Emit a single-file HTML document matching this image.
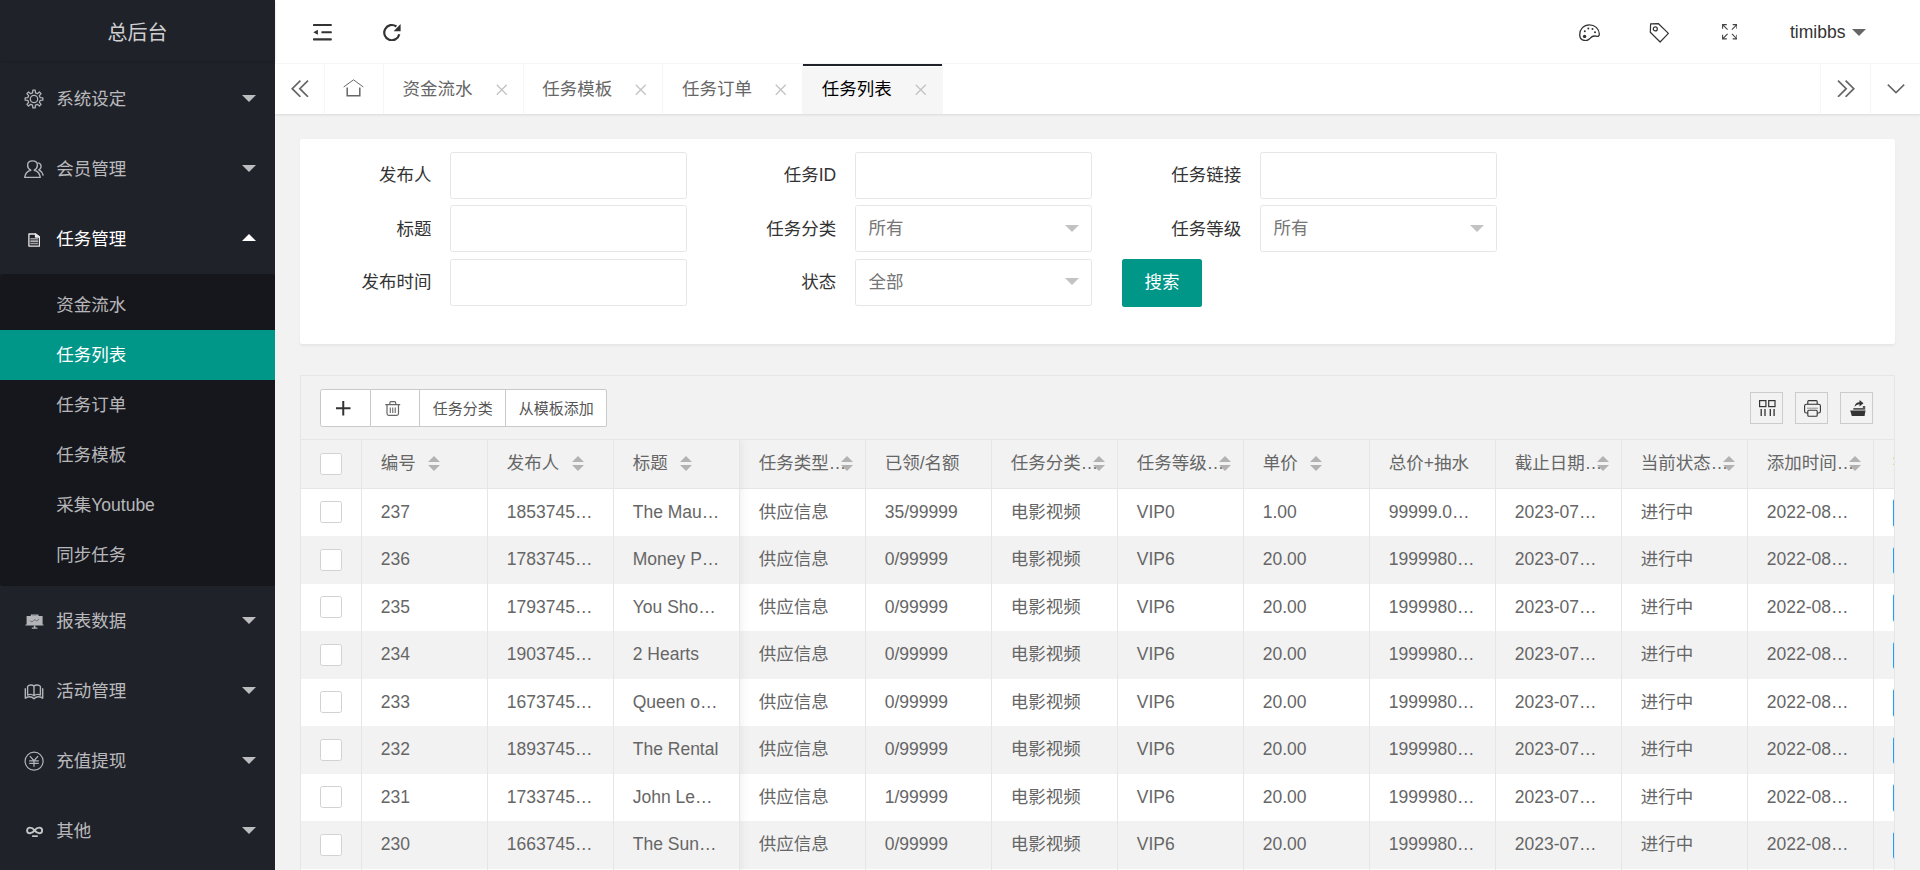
<!DOCTYPE html>
<html lang="zh-CN">
<head>
<meta charset="utf-8">
<title>总后台</title>
<style>
*{box-sizing:border-box;margin:0;padding:0}
html,body{width:1920px;height:870px;overflow:hidden;background:#f2f2f2}
body{font-family:"Liberation Sans","Noto Sans CJK SC",sans-serif;font-size:14px;color:#333;line-height:24px}
#app{zoom:1.25;position:relative;width:1536px;height:696px;overflow:hidden;background:#f2f2f2}
ul,li,dl,dd{list-style:none}
svg{display:block}
/* ---------- side ---------- */
.side{position:absolute;left:0;top:0;width:220px;height:696px;background:#20222A;color:rgba(255,255,255,.7);z-index:20}
.logo{position:absolute;left:0;top:0;width:220px;height:49px;line-height:53px;text-align:center;font-size:16px;color:rgba(255,255,255,.8);box-shadow:0 1px 2px 0 rgba(0,0,0,.15);z-index:2}
.nav{position:absolute;left:0;top:50.8px;width:220px}
.nav .item{position:relative}
.nav .item>a{display:block;position:relative;height:56px;line-height:40px;padding:8px 30px 8px 45px;color:rgba(255,255,255,.7);font-size:14px;white-space:nowrap}
.nav .item.open>a{color:#fff}
.side .ico{position:absolute}
.nav .more{position:absolute;right:15px;top:50%;margin-top:-3px;width:0;height:0;border:6px solid transparent;border-top-color:rgba(255,255,255,.7)}
.nav .item.open .more{margin-top:-9px;border-top-color:transparent;border-bottom-color:#fff}
.nav dl{background:rgba(0,0,0,.3);padding:5px 0;border-radius:2px}
.nav dd a{display:block;height:40px;line-height:40px;padding-left:45px;color:rgba(255,255,255,.7);white-space:nowrap}
.nav dd.this a{background:#009688;color:#fff}
/* ---------- header ---------- */
.header{position:absolute;left:220px;top:0;right:0;height:51.2px;background:#fff;border-bottom:1px solid #f6f6f6;z-index:10}
.header .hi{position:absolute;top:0;height:50px;color:#333}
.header .hi svg{position:absolute}
.uname{position:absolute;top:0;height:50px;line-height:52px;font-size:14px;color:#333}
.ucaret{position:absolute;width:0;height:0;border:5px solid transparent;border-top-color:#666}
/* ---------- tabs ---------- */
.tabs{position:absolute;left:220px;top:51.2px;right:0;height:40px;background:#fff;box-shadow:0 1px 2px 0 rgba(0,0,0,.1);z-index:9}
.tabs .ctl{position:absolute;top:0;width:40px;height:40px;color:#666}
.tabs .ctl.l{left:0;border-right:1px solid #f6f6f6}
.tabs .ctl.r1{right:40px;border-left:1px solid #f6f6f6}
.tabs .ctl.r0{right:0;border-left:1px solid #f6f6f6}
.tabs ul{position:absolute;left:40px;top:0;height:40px;white-space:nowrap;font-size:0}
.tabs li{position:relative;display:inline-block;vertical-align:top;height:40px;line-height:40px;font-size:14px;color:#666;padding:0 40px 0 15px;border-right:1px solid #f6f6f6}
.tabs li.home{padding:0 15px;width:47px}
.tabs li.this{background:#f6f6f6;color:#000}
.tabs li.this:after{content:"";position:absolute;left:0;top:0;width:100%;height:1.6px;background:#20222A;box-sizing:content-box;border-bottom:1px solid #fff}
.tabs li .x{position:absolute;right:10px;top:13.2px;width:14px;height:14px;color:#c2c2c2}
/* ---------- body ---------- */
.body{position:absolute;left:220px;top:91.2px;right:0;bottom:0;background:#f2f2f2;overflow:hidden}
.card{position:absolute;left:20px;right:20px;background:#fff;border-radius:2px;box-shadow:0 1px 2px 0 rgba(0,0,0,.05)}
.flabel{position:absolute;width:110px;height:38px;line-height:20px;padding:9px 15px;text-align:right;color:#333;font-size:14px;white-space:nowrap}
.finput{position:absolute;width:189.6px;height:37.6px;border:1px solid #e6e6e6;border-radius:2px;background:#fff;line-height:36px;padding-left:10px;color:#757575;font-size:14px}
.finput .edge{position:absolute;right:10px;top:50%;margin-top:-3px;width:0;height:0;border:6px solid transparent;border-top-color:#c2c2c2}
.btn{position:absolute;height:38.4px;line-height:38px;padding:0 18px;background:#009688;color:#fff;border-radius:2px;font-size:14px;white-space:nowrap}
/* ---------- table ---------- */
.tview{position:absolute;left:20px;right:20px;top:211px;height:500px;border:1px solid #e6e6e6;border-bottom:none;overflow:hidden}
.ttool{position:relative;height:51px;border-bottom:1px solid #e6e6e6;background:#f2f2f2}
.bgroup{position:absolute;left:15px;top:10.4px;height:30px;font-size:0;white-space:nowrap}
.bgroup span{display:inline-block;vertical-align:top;height:30px;line-height:29.6px;border:1px solid #c9c9c9;border-left:none;background:#fff;color:#555;font-size:12px;padding:0 10px;text-align:center;position:relative}
.bgroup span:first-child{border-left:1px solid #c9c9c9;border-radius:2px 0 0 2px}
.bgroup span:last-child{border-radius:0 2px 2px 0}
.tself{position:absolute;right:17px;top:12.4px;height:26px}
.tself i{position:absolute;top:0;width:26px;height:26px;border:1px solid #ccc;color:#333}
.tr{display:flex;flex-wrap:nowrap;height:38px;width:2000px}
.tr.th{height:39px;border-bottom:1px solid #e6e6e6;background:#f2f2f2;box-sizing:content-box;height:38px}
.tr.even{background:#f2f2f2}
.tr.odd{background:#fff}
.td{box-sizing:content-box;flex:none;width:100px;height:38px;padding:5px 0;border-right:1px solid #e6e6e6;font-size:14px;color:#666}
.td.cbx{width:48px}
.xb{display:inline-block;vertical-align:middle;height:22px;line-height:22px;padding:0 5px;font-size:12px;font-weight:400;background:#1E9FFF;color:#fff;border-radius:2px}
.cell{position:relative;height:28px;line-height:28px;padding:0 15px;overflow:hidden;text-overflow:ellipsis;white-space:nowrap}
.cell.cb{padding:0 15px;text-overflow:clip}
.cell.cb i{display:block;width:17.6px;height:17.6px;margin-top:5px;border:1px solid #d2d2d2;border-radius:2px;background:#fff}
.sort{display:inline-block;position:relative;width:10px;height:20px;margin-left:5px;vertical-align:middle}
.sort .e{position:absolute;left:5px;width:0;height:0;border:5px solid transparent;overflow:hidden}
.sort .a{top:3px;border-top:none;border-bottom-color:#b2b2b2}
.sort .d{bottom:5px;border-bottom:none;border-top-color:#b2b2b2}
.fixclip{position:absolute;left:0;top:50.8px;width:400px;height:460px;overflow:hidden;pointer-events:none}
.fixshadow{position:absolute;left:-20px;top:0;width:371.2px;height:500px;box-shadow:0 -1px 8px rgba(0,0,0,.08)}
</style>
</head>
<body>
<div id="app">
<div class="side">
  <div class="logo">总后台</div>
  <ul class="nav">
    <li class="item"><a>系统设定<span class="more"></span></a></li>
    <li class="item"><a>会员管理<span class="more"></span></a></li>
    <li class="item open"><a>任务管理<span class="more"></span></a>
      <dl>
        <dd><a>资金流水</a></dd>
        <dd class="this"><a>任务列表</a></dd>
        <dd><a>任务订单</a></dd>
        <dd><a>任务模板</a></dd>
        <dd><a>采集Youtube</a></dd>
        <dd><a>同步任务</a></dd>
      </dl>
    </li>
    <li class="item"><a>报表数据<span class="more"></span></a></li>
    <li class="item"><a>活动管理<span class="more"></span></a></li>
    <li class="item"><a>充值提现<span class="more"></span></a></li>
    <li class="item"><a>其他<span class="more"></span></a></li>
  </ul>
  <svg class="ico" style="left:18.48px;top:70.56px;width:17.60px;height:17.60px" viewBox="0 0 22 22" fill="none" stroke="#b3b4b7" stroke-width="1.300" stroke-linejoin="round"><path d="M9.53 4.87 L9.82 2.18 L12.18 2.18 L12.47 4.87 L14.29 5.63 L16.40 3.92 L18.08 5.60 L16.37 7.71 L17.13 9.53 L19.82 9.82 L19.82 12.18 L17.13 12.47 L16.37 14.29 L18.08 16.40 L16.40 18.08 L14.29 16.37 L12.47 17.13 L12.18 19.82 L9.82 19.82 L9.53 17.13 L7.71 16.37 L5.60 18.08 L3.92 16.40 L5.63 14.29 L4.87 12.47 L2.18 12.18 L2.18 9.82 L4.87 9.53 L5.63 7.71 L3.92 5.60 L5.60 3.92 L7.71 5.63Z"/><circle cx="11" cy="11" r="3.700"/></svg>
  <svg class="ico" style="left:19.20px;top:128.00px;width:16.00px;height:14.80px" viewBox="0 0 20 18.5" fill="none" stroke="#b3b4b7" stroke-width="1.400" stroke-linejoin="round"><path d="M6.800 10.200C4.500 9 3.600 7 3.600 5.200 3.600 2.500 5.700.9 8.500.9s4.900 1.600 4.900 4.300c0 1.800-.9 3.800-3.200 5 3.300.8 5.600 3.300 6.100 7.200H.7c.5-3.900 2.800-6.400 6.100-7.200z"/><path d="M13.600 2.900c2.400.3 3.600 2.100 3.400 3.900-.2 1.400-1 2.400-2.200 3 2.500 1.200 3.800 3.200 4.400 5.800"/></svg>
  <svg class="ico" style="left:22.00px;top:186.00px;width:9.92px;height:11.20px" viewBox="0 0 12.4 14" fill="none" stroke="#e8e8e9" stroke-width="1.300" stroke-linejoin="round"><path d="M.9 1H7.500l4 3v9.100H.9z"/><path d="M7.500 1v3h4z" fill="#e8e8e9"/><path d="M2.300 5.700h7.800M2.300 10.500h7.800" stroke="#9d9ea1" stroke-width="1.500"/><path d="M2.300 8.100h7.800" stroke="#fff" stroke-width="1.100"/></svg>
  <svg class="ico" style="left:19.60px;top:490.80px;width:15.20px;height:12.00px" viewBox="0 0 19 15" fill="#b3b4b7" stroke="none"><path d="M5.800 .4h7.700v1.700h4.100v8.400h.9v1.100H.5V10.500h1.100V2.100h4.200z"/><path d="M8.800 11.600h1.600v2h2v1.100H6.800v-1.100h2z"/><path d="M5 6.500c1 1.600 2.200 1.500 3.300.3 1.200-1.300 2-1.300 3-.2.700.7 1.300.2 2.600-1.700" fill="none" stroke="#55575d" stroke-width=".8"/><path d="M7.300 1.500h4.500" stroke="#8a8b90" stroke-width=".7"/></svg>
  <svg class="ico" style="left:19.20px;top:546.80px;width:16.00px;height:12.80px" viewBox="0 0 20 16" fill="none" stroke="#b3b4b7" stroke-width="1.400" stroke-linejoin="round" stroke-linecap="round"><path d="M10 2.200C8.600.6 5.200.6 3.600 2.400V11c1.900-.8 4.800-.6 6.400.8 1.600-1.400 4.500-1.600 6.400-.8V2.400C14.800.6 11.400.6 10 2.200zV11.800"/><path d="M1.300 4.800v9.400c3.200-1.800 6.700-1.600 8.700.6 2-2.200 5.500-2.400 8.700-.6V4.800"/></svg>
  <svg class="ico" style="left:19.20px;top:600.80px;width:16.16px;height:16.32px" viewBox="0 0 20.2 20.4" fill="none" stroke="#b3b4b7" stroke-width="1.200"><circle cx="10.100" cy="10.200" r="9"/><path d="M5.900 5.100L10 9.700l4.100-4.600M10 9.700v6.100M5.200 10h9.600M5.200 12.500h9.600" stroke-width="1.250"/></svg>
  <svg class="ico" style="left:19.60px;top:660.80px;width:15.20px;height:9.60px" viewBox="0 0 19 12" fill="none" stroke="#c5c6c8" stroke-width="1.900"><path d="M9.600 4.400C8 2.200 6.500 1.600 4.900 1.600a2.800 2.800 0 0 0 0 5.600c1.600 0 3.100-.6 4.700-2.800 1.600-2.200 3.100-2.800 4.700-2.800a2.800 2.800 0 0 1 0 5.600c-1.600 0-3.100-.6-4.700-2.800z"/><rect x="7.100" y="9.300" width="5.700" height="1.700" fill="#c5c6c8" stroke="none"/></svg>
</div>
<div class="header">
  <!-- shrink icon: device box x313-332 y24-41 -->
  <svg style="position:absolute;left:30.4px;top:19.2px;width:15.2px;height:13.6px" viewBox="0 0 19 17" fill="#333"><rect x="0" y="0" width="18.800" height="2.100" rx=".6"/><rect x="8.400" y="7.200" width="10.400" height="2.100" rx=".6"/><rect x="0" y="14.300" width="18.800" height="2.100" rx=".6"/><path d="M0.300 8.200L4.900 5.700v5z"/></svg>
  <!-- refresh icon: device x383.7-401.2 y23.9-41 -->
  <svg style="position:absolute;left:86.600px;top:18px;width:15.2px;height:14.4px" viewBox="0 0 19 18" fill="none" stroke="#333" stroke-width="2.200"><path d="M16.300 11.300A7.600 7.600 0 1 1 13.400 3.500"/><path d="M17.600 1v7.200h-7z" fill="#333" stroke="none"/></svg>
  <!-- palette: device x1579.4-1599.8 y24.2-40.9 -->
  <svg style="position:absolute;left:1043.2px;top:19px;width:17px;height:14px" viewBox="0 0 21.250 17.500" fill="none" stroke="#333" stroke-width="1.300" stroke-linejoin="round"><path d="M10.300 .8c5.500 0 9.800 3.800 10 9.200.1 2.300-1.300 2.700-3.200 2.200-2.700-.7-4.300.2-5.800 2-1.400 1.700-3.400 2.700-5.800 2.300C2.400 16 .7 13.600.7 10.700.7 5 4.800.8 10.300.8z"/><circle cx="5.600" cy="12.400" r="1.700" fill="#333" stroke="none"/><circle cx="5.800" cy="7.200" r="1" fill="#333" stroke="none"/><circle cx="9.300" cy="4.600" r="1" fill="#333" stroke="none"/><circle cx="13.500" cy="4.900" r="1" fill="#333" stroke="none"/><circle cx="16" cy="8.300" r="1" fill="#333" stroke="none"/></svg>
  <!-- tag: device x1649.7-1669.4 y22.9-42 -->
  <svg style="position:absolute;left:1099.4px;top:18px;width:16.400px;height:16px" viewBox="0 0 20.500 20" fill="none" stroke="#333" stroke-width="1.200" stroke-linejoin="round"><path d="M1.600 .9l7.900-.2 9.900 9.700-8.300 8.600-9.800-9.700z"/><circle cx="6.300" cy="5.900" r="2"/></svg>
  <!-- fullscreen: device x1721.9-1737 y24-39.5 -->
  <svg style="position:absolute;left:1157.4px;top:19.200px;width:12.400px;height:12.400px" viewBox="0 0 15.500 15.500" fill="none" stroke="#444" stroke-width="1.100"><path d="M.6 4.800V.6h4.200M.6 .6l5 5M10.700 .6h4.200v4.200M14.900 .6l-5 5M.6 10.700v4.200h4.200M.6 14.900l5-5M14.900 10.700v4.200h-4.200M14.900 14.900l-5-5"/></svg>
  <div class="uname" style="left:1212px">timibbs</div>
  <span class="ucaret" style="left:1261.300px;top:23px;border-width:5.800px"></span>
</div>

<div class="tabs">
  <div class="ctl l"><svg style="position:absolute;left:12.500px;top:12.600px;width:14.400px;height:14px" viewBox="0 0 18 17.500" fill="none" stroke="#666" stroke-width="1.700"><path d="M9.400 .6L1.200 8.700l8.200 8.100M17 .6L8.800 8.700l8.200 8.100"/></svg></div>
  <ul>
    <li class="home"><svg style="position:absolute;left:14.600px;top:11.800px;width:16.800px;height:14.400px" viewBox="0 0 21 18" fill="none" stroke="#666"><path d="M.7 8L10.500 .8 20.300 8" stroke-width="1"/><path d="M4.200 8.400v8.300h12.600V8.400" stroke-width="1.500"/></svg></li>
    <li>资金流水<svg class="x" viewBox="0 0 14 14" stroke="currentColor" stroke-width="1"><path d="M3 3l8 8M11 3l-8 8"/></svg></li>
    <li>任务模板<svg class="x" viewBox="0 0 14 14" stroke="currentColor" stroke-width="1"><path d="M3 3l8 8M11 3l-8 8"/></svg></li>
    <li>任务订单<svg class="x" viewBox="0 0 14 14" stroke="currentColor" stroke-width="1"><path d="M3 3l8 8M11 3l-8 8"/></svg></li>
    <li class="this">任务列表<svg class="x" viewBox="0 0 14 14" stroke="currentColor" stroke-width="1"><path d="M3 3l8 8M11 3l-8 8"/></svg></li>
  </ul>
  <div class="ctl r1"><svg style="position:absolute;left:12.500px;top:12.600px;width:14.400px;height:14px" viewBox="0 0 18 17.500" fill="none" stroke="#666" stroke-width="1.700"><path d="M1 .6l8.200 8.100L1 16.800M8.600 .6l8.200 8.100-8.200 8.100"/></svg></div>
  <div class="ctl r0"><svg style="position:absolute;left:12.500px;top:14.800px;width:14.400px;height:9px" viewBox="0 0 18 11" fill="none" stroke="#666" stroke-width="1.500"><path d="M.8 1.500L9 9.500l8.200-8"/></svg></div>
</div>

<div class="body">
<div class="card" style="top:20px;height:163.7px">
<div class="flabel" style="left:10.2px;top:10.5px">发布人</div>
<div class="finput" style="left:120.2px;top:10.5px"></div>
<div class="flabel" style="left:334px;top:10.5px">任务ID</div>
<div class="finput" style="left:444px;top:10.5px"></div>
<div class="flabel" style="left:658px;top:10.5px">任务链接</div>
<div class="finput" style="left:768px;top:10.5px"></div>
<div class="flabel" style="left:10.2px;top:53.1px">标题</div>
<div class="finput" style="left:120.2px;top:53.1px"></div>
<div class="flabel" style="left:334px;top:53.1px">任务分类</div>
<div class="finput" style="left:444px;top:53.1px">所有<span class="edge"></span></div>
<div class="flabel" style="left:658px;top:53.1px">任务等级</div>
<div class="finput" style="left:768px;top:53.1px">所有<span class="edge"></span></div>
<div class="flabel" style="left:10.2px;top:95.7px">发布时间</div>
<div class="finput" style="left:120.2px;top:95.7px"></div>
<div class="flabel" style="left:334px;top:95.7px">状态</div>
<div class="finput" style="left:444px;top:95.7px">全部<span class="edge"></span></div>
<div class="btn" style="left:657.6px;top:95.7px">搜索</div>
</div>
<div class="tview" style="top:209px">
<div class="ttool"><div class="bgroup"><span style="width:41.2px"><svg style="position:absolute;left:12.400px;top:8.900px;width:11.600px;height:11.600px" viewBox="0 0 14.500 14.500" stroke="#333" stroke-width="2"><path d="M7.250 0v14.500M0 7.250h14.500"/></svg></span><span style="width:39.200px"><svg style="position:absolute;left:11px;top:8.700px;width:12.400px;height:12px" viewBox="0 0 15.500 15" fill="none" stroke="#666" stroke-width="1.200"><path d="M.3 3.600h14.900M4.800 3.600V2c0-.8.500-1.300 1.300-1.300h3.300c.8 0 1.300.5 1.300 1.300v1.600M2 4.200v8.300c0 1.100.7 1.800 1.800 1.800h7.900c1.100 0 1.800-.7 1.800-1.800V4.200"/><path d="M5.300 6.500v5.500M7.750 6.500v5.500M10.200 6.500v5.500" stroke-width="1.100"/></svg></span><span>任务分类</span><span>从模板添加</span></div>
<div class="tself"><i style="right:72px"><svg style="position:absolute;left:6.300px;top:5.500px;width:13.600px;height:13.200px" viewBox="0 0 17 16.500" fill="none" stroke="#333" stroke-width="1.200"><rect x=".6" y=".6" width="6.300" height="6"/><rect x="9.700" y=".6" width="6.300" height="6"/><path d="M2.200 9v7.400M6 9v7.400M11.300 9v7.400M15.100 9v7.400" stroke-width="1.300"/></svg></i><i style="right:36px"><svg style="position:absolute;left:6px;top:5.500px;width:13.600px;height:13.600px" viewBox="0 0 17 17" fill="none" stroke="#333" stroke-width="1.100"><rect x="3.800" y=".6" width="9.400" height="4.500" rx="1"/><rect x=".6" y="4.300" width="15.800" height="8.700" rx="1.800" fill="#f2f2f2"/><rect x="3.800" y="10.300" width="9.400" height="6" rx="1" fill="#f2f2f2"/><path d="M3 8.200h11" stroke-width=".8" stroke="#777"/></svg></i><i style="right:0"><svg style="position:absolute;left:6.600px;top:5.500px;width:12.800px;height:13.200px" viewBox="0 0 16 16.500" fill="#333" stroke="none"><path d="M.2 10.500h15.300l-1 5.800H1.900z"/><path d="M3.300 9.700V8h9.500V6h2.400v3.700z" fill="#555"/><path d="M4.500 7c.3-3 2.200-4.700 5-4.800V0l4 3.300-4 3.300V4.300C7.500 4.300 6 5.200 4.500 7z"/></svg></i></div></div>
<div class="tr th"><div class="td cbx"><div class="cell cb"><i></i></div></div><div class="td"><div class="cell"><span>编号</span><span class="sort"><i class="e a"></i><i class="e d"></i></span></div></div><div class="td"><div class="cell"><span>发布人</span><span class="sort"><i class="e a"></i><i class="e d"></i></span></div></div><div class="td"><div class="cell"><span>标题</span><span class="sort"><i class="e a"></i><i class="e d"></i></span></div></div><div class="td"><div class="cell"><span>任务类型</span><span class="sort"><i class="e a"></i><i class="e d"></i></span></div></div><div class="td"><div class="cell"><span>已领/名额</span></div></div><div class="td"><div class="cell"><span>任务分类</span><span class="sort"><i class="e a"></i><i class="e d"></i></span></div></div><div class="td"><div class="cell"><span>任务等级</span><span class="sort"><i class="e a"></i><i class="e d"></i></span></div></div><div class="td"><div class="cell"><span>单价</span><span class="sort"><i class="e a"></i><i class="e d"></i></span></div></div><div class="td"><div class="cell"><span>总价+抽水</span></div></div><div class="td"><div class="cell"><span>截止日期</span><span class="sort"><i class="e a"></i><i class="e d"></i></span></div></div><div class="td"><div class="cell"><span>当前状态</span><span class="sort"><i class="e a"></i><i class="e d"></i></span></div></div><div class="td"><div class="cell"><span>添加时间</span><span class="sort"><i class="e a"></i><i class="e d"></i></span></div></div><div class="td"><div class="cell"><span style="color:#e9a23b">操作</span></div></div></div>
<div class="tr odd"><div class="td cbx"><div class="cell cb"><i></i></div></div><div class="td"><div class="cell">237</div></div><div class="td"><div class="cell">18537459999</div></div><div class="td"><div class="cell">The Mauritanian</div></div><div class="td"><div class="cell">供应信息</div></div><div class="td"><div class="cell">35/99999</div></div><div class="td"><div class="cell">电影视频</div></div><div class="td"><div class="cell">VIP0</div></div><div class="td"><div class="cell">1.00</div></div><div class="td"><div class="cell">99999.00+0.00</div></div><div class="td"><div class="cell">2023-07-31 00:00:00</div></div><div class="td"><div class="cell">进行中</div></div><div class="td"><div class="cell">2022-08-05 10:00:00</div></div><div class="td"><div class="cell" style="text-overflow:clip"><b class="xb">编辑</b></div></div></div>
<div class="tr even"><div class="td cbx"><div class="cell cb"><i></i></div></div><div class="td"><div class="cell">236</div></div><div class="td"><div class="cell">17837459999</div></div><div class="td"><div class="cell">Money Plane</div></div><div class="td"><div class="cell">供应信息</div></div><div class="td"><div class="cell">0/99999</div></div><div class="td"><div class="cell">电影视频</div></div><div class="td"><div class="cell">VIP6</div></div><div class="td"><div class="cell">20.00</div></div><div class="td"><div class="cell">1999980.00+0.00</div></div><div class="td"><div class="cell">2023-07-31 00:00:00</div></div><div class="td"><div class="cell">进行中</div></div><div class="td"><div class="cell">2022-08-05 10:00:00</div></div><div class="td"><div class="cell" style="text-overflow:clip"><b class="xb">编辑</b></div></div></div>
<div class="tr odd"><div class="td cbx"><div class="cell cb"><i></i></div></div><div class="td"><div class="cell">235</div></div><div class="td"><div class="cell">17937459999</div></div><div class="td"><div class="cell">You Should Have Left</div></div><div class="td"><div class="cell">供应信息</div></div><div class="td"><div class="cell">0/99999</div></div><div class="td"><div class="cell">电影视频</div></div><div class="td"><div class="cell">VIP6</div></div><div class="td"><div class="cell">20.00</div></div><div class="td"><div class="cell">1999980.00+0.00</div></div><div class="td"><div class="cell">2023-07-31 00:00:00</div></div><div class="td"><div class="cell">进行中</div></div><div class="td"><div class="cell">2022-08-05 10:00:00</div></div><div class="td"><div class="cell" style="text-overflow:clip"><b class="xb">编辑</b></div></div></div>
<div class="tr even"><div class="td cbx"><div class="cell cb"><i></i></div></div><div class="td"><div class="cell">234</div></div><div class="td"><div class="cell">19037459999</div></div><div class="td"><div class="cell">2 Hearts</div></div><div class="td"><div class="cell">供应信息</div></div><div class="td"><div class="cell">0/99999</div></div><div class="td"><div class="cell">电影视频</div></div><div class="td"><div class="cell">VIP6</div></div><div class="td"><div class="cell">20.00</div></div><div class="td"><div class="cell">1999980.00+0.00</div></div><div class="td"><div class="cell">2023-07-31 00:00:00</div></div><div class="td"><div class="cell">进行中</div></div><div class="td"><div class="cell">2022-08-05 10:00:00</div></div><div class="td"><div class="cell" style="text-overflow:clip"><b class="xb">编辑</b></div></div></div>
<div class="tr odd"><div class="td cbx"><div class="cell cb"><i></i></div></div><div class="td"><div class="cell">233</div></div><div class="td"><div class="cell">16737459999</div></div><div class="td"><div class="cell">Queen of Spades</div></div><div class="td"><div class="cell">供应信息</div></div><div class="td"><div class="cell">0/99999</div></div><div class="td"><div class="cell">电影视频</div></div><div class="td"><div class="cell">VIP6</div></div><div class="td"><div class="cell">20.00</div></div><div class="td"><div class="cell">1999980.00+0.00</div></div><div class="td"><div class="cell">2023-07-31 00:00:00</div></div><div class="td"><div class="cell">进行中</div></div><div class="td"><div class="cell">2022-08-05 10:00:00</div></div><div class="td"><div class="cell" style="text-overflow:clip"><b class="xb">编辑</b></div></div></div>
<div class="tr even"><div class="td cbx"><div class="cell cb"><i></i></div></div><div class="td"><div class="cell">232</div></div><div class="td"><div class="cell">18937459999</div></div><div class="td"><div class="cell">The Rental</div></div><div class="td"><div class="cell">供应信息</div></div><div class="td"><div class="cell">0/99999</div></div><div class="td"><div class="cell">电影视频</div></div><div class="td"><div class="cell">VIP6</div></div><div class="td"><div class="cell">20.00</div></div><div class="td"><div class="cell">1999980.00+0.00</div></div><div class="td"><div class="cell">2023-07-31 00:00:00</div></div><div class="td"><div class="cell">进行中</div></div><div class="td"><div class="cell">2022-08-05 10:00:00</div></div><div class="td"><div class="cell" style="text-overflow:clip"><b class="xb">编辑</b></div></div></div>
<div class="tr odd"><div class="td cbx"><div class="cell cb"><i></i></div></div><div class="td"><div class="cell">231</div></div><div class="td"><div class="cell">17337459999</div></div><div class="td"><div class="cell">John Lewis: Good Trouble</div></div><div class="td"><div class="cell">供应信息</div></div><div class="td"><div class="cell">1/99999</div></div><div class="td"><div class="cell">电影视频</div></div><div class="td"><div class="cell">VIP6</div></div><div class="td"><div class="cell">20.00</div></div><div class="td"><div class="cell">1999980.00+0.00</div></div><div class="td"><div class="cell">2023-07-31 00:00:00</div></div><div class="td"><div class="cell">进行中</div></div><div class="td"><div class="cell">2022-08-05 10:00:00</div></div><div class="td"><div class="cell" style="text-overflow:clip"><b class="xb">编辑</b></div></div></div>
<div class="tr even"><div class="td cbx"><div class="cell cb"><i></i></div></div><div class="td"><div class="cell">230</div></div><div class="td"><div class="cell">16637459999</div></div><div class="td"><div class="cell">The Sunlit Night</div></div><div class="td"><div class="cell">供应信息</div></div><div class="td"><div class="cell">0/99999</div></div><div class="td"><div class="cell">电影视频</div></div><div class="td"><div class="cell">VIP6</div></div><div class="td"><div class="cell">20.00</div></div><div class="td"><div class="cell">1999980.00+0.00</div></div><div class="td"><div class="cell">2023-07-31 00:00:00</div></div><div class="td"><div class="cell">进行中</div></div><div class="td"><div class="cell">2022-08-05 10:00:00</div></div><div class="td"><div class="cell" style="text-overflow:clip"><b class="xb">编辑</b></div></div></div>
<div class="tr odd"><div class="td cbx"><div class="cell cb"><i></i></div></div><div class="td"><div class="cell">229</div></div><div class="td"><div class="cell">15937459999</div></div><div class="td"><div class="cell">The Outpost</div></div><div class="td"><div class="cell">供应信息</div></div><div class="td"><div class="cell">0/99999</div></div><div class="td"><div class="cell">电影视频</div></div><div class="td"><div class="cell">VIP6</div></div><div class="td"><div class="cell">20.00</div></div><div class="td"><div class="cell">1999980.00+0.00</div></div><div class="td"><div class="cell">2023-07-31 00:00:00</div></div><div class="td"><div class="cell">进行中</div></div><div class="td"><div class="cell">2022-08-05 10:00:00</div></div><div class="td"><div class="cell" style="text-overflow:clip"><b class="xb">编辑</b></div></div></div>
<div class="fixclip"><div class="fixshadow"></div></div>
</div>
</div>
</div>
</body>
</html>
